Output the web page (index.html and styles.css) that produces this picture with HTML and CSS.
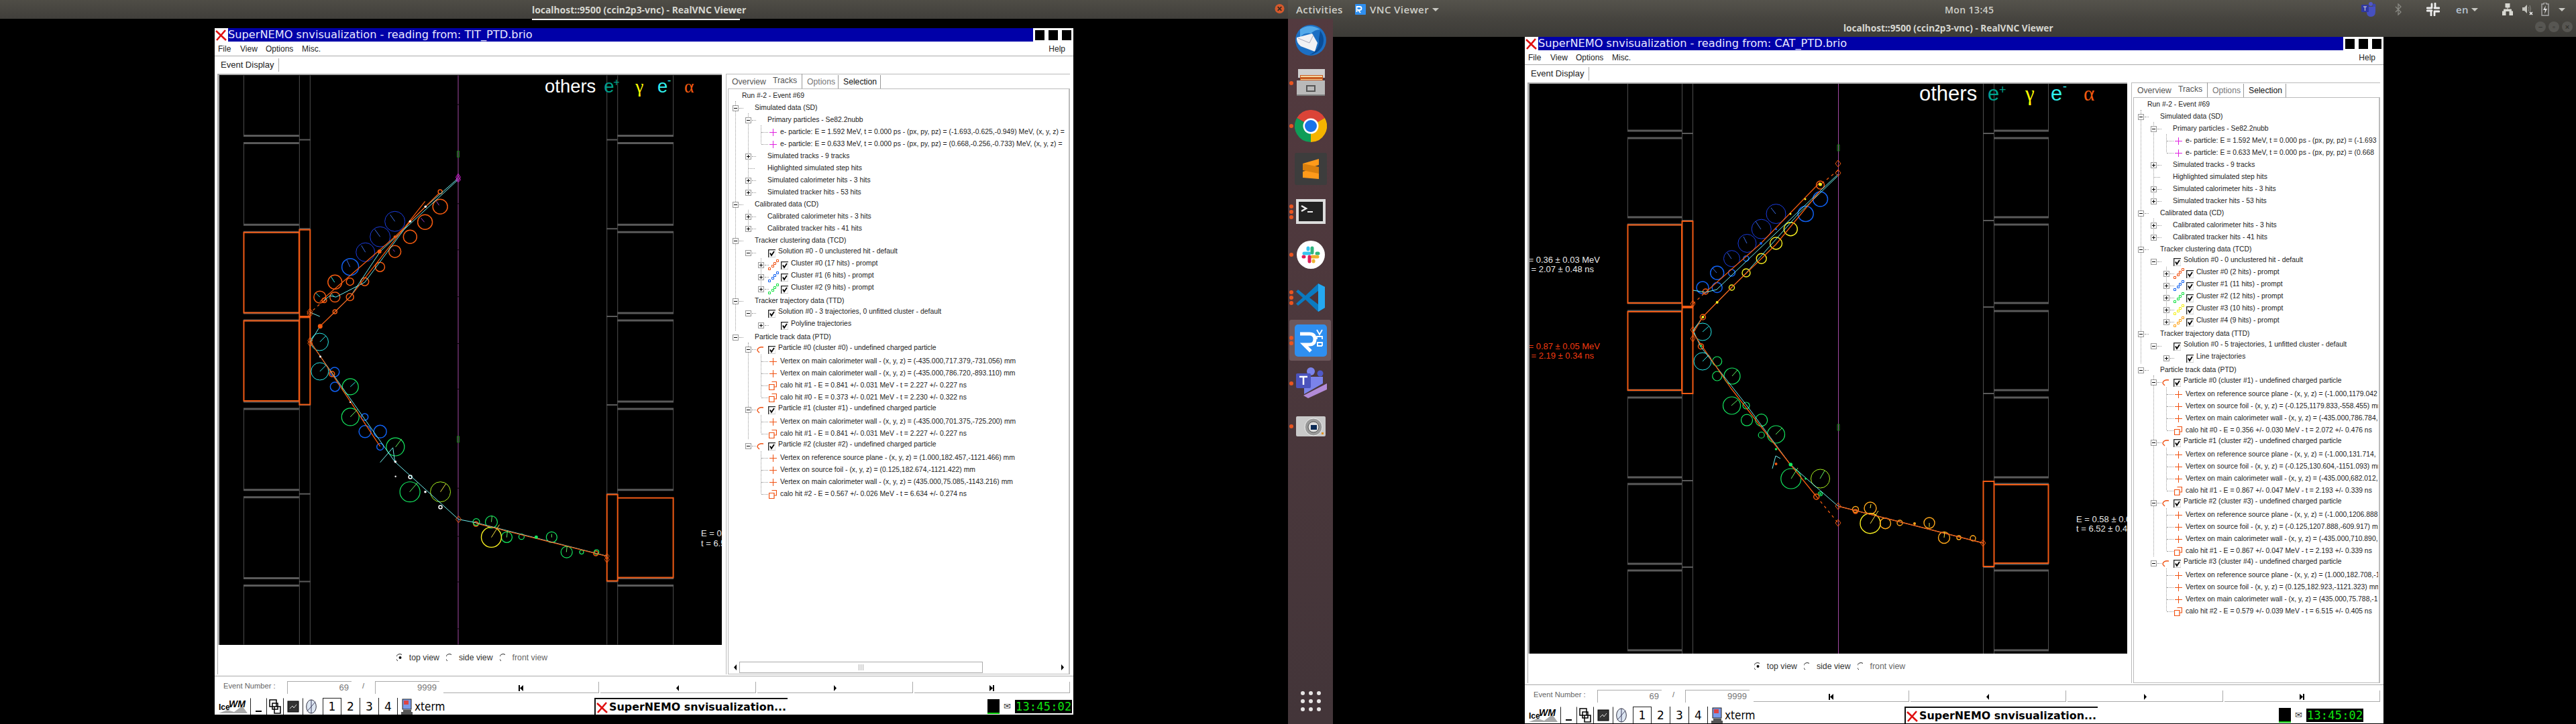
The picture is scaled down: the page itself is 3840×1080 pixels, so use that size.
FILE: index.html
```html
<!DOCTYPE html>
<html lang="en"><head><meta charset="utf-8"><title>SuperNEMO VNC</title><link rel="stylesheet" href="styles.css"></head>
<body>
<svg class="defs" width="0" height="0">
<symbol id="cross" viewBox="0 0 11 11"><path d="M5.5 0V11M0 5.5H11" fill="none" stroke="currentColor"/></symbol>
<symbol id="calo" viewBox="0 0 12 13"><path d="M4.5 .5H11.5V8H8M.5 4.5H8V12.5H.5Z" fill="none" stroke="#f05010" stroke-width="1.2"/></symbol>
<symbol id="arc" viewBox="0 0 11 11"><path d="M1 7C1 3 5 1 10 2M1 7 4 10" fill="none" stroke="#f05010" stroke-width="1.3"/></symbol>
<symbol id="chk" viewBox="0 0 11 12"><path d="M.7 12V.7H11" fill="none" stroke="#222" stroke-width="1.3"/><path d="M11 1.5V11.5H1.5" fill="none" stroke="#ccc"/><path d="M3 5.5 5 9 9 3" fill="none" stroke="#000" stroke-width="1.8"/></symbol>
<symbol id="stairs" viewBox="0 0 16 16"><path d="M.5 12.5H3.5V15.5H.5ZM5.5 8.500H8.500V11.500H5.5ZM8.500 4.500H11.500V7.500H8.500ZM12.500 .5H15.500V3.500H12.500Z" fill="none" stroke="currentColor"/></symbol>
<symbol id="radio" viewBox="0 0 10 12"><path d="M8 1.500A4.500 4.500 0 0 0 2 11" fill="none" stroke="#222"/></symbol>
<symbol id="radioOn" viewBox="0 0 10 12"><path d="M8 1.500A4.500 4.500 0 0 0 2 11" fill="none" stroke="#222"/><circle cx="5.500" cy="6" r="2" fill="#111"/></symbol>
<symbol id="xlogo" viewBox="0 0 20 20"><path d="M2 4 17 18M16 3 3 18" fill="none" stroke="#e01010" stroke-width="2.600"/></symbol>
<symbol id="first" viewBox="0 0 7 9"><path d="M0 0H2V9H0ZM7 0V9L2 4.500Z"/></symbol>
<symbol id="prev" viewBox="0 0 7 9"><path d="M5 0V9L1 4.500Z"/></symbol>
<symbol id="next" viewBox="0 0 7 9"><path d="M2 0V9L6 4.500Z"/></symbol>
<symbol id="last" viewBox="0 0 7 9"><path d="M0 0V9L5 4.500ZM5 0H7V9H5Z"/></symbol>
<symbol id="ice" viewBox="0 0 45 24"><path d="M1 22 14 17 24 20 36 11 44 22H1Z" fill="#aaa"/><text x="1" y="17" font-size="12" font-weight="700" font-family="Liberation Sans">Ice</text><text x="16" y="13" font-size="14" font-weight="700" font-style="italic" font-family="Liberation Sans">WM</text></symbol>
<symbol id="wins" viewBox="0 0 18 22"><path d="M1 1H11V11H1ZM5 6H13V15H5ZM8 11H17V21H8Z" fill="#fff" stroke="#000" stroke-width="1.500"/></symbol>
<symbol id="mon" viewBox="0 0 18 20"><rect x="1" y="2" width="16" height="16" fill="#333" stroke="#000"/><path d="M4 13 8 9 10 12 14 7" stroke="#ddd" fill="none"/></symbol>
<symbol id="glob" viewBox="0 0 18 24"><ellipse cx="9" cy="12" rx="8" ry="11" fill="#dde6f2" stroke="#223"/><path d="M9 1V23M9 12 2 20M9 12 16 4" stroke="#335" fill="none"/></symbol>
<symbol id="xt" viewBox="0 0 18 24"><rect x="3" y="1" width="13" height="15" fill="#7a9ae8" stroke="#222"/><path d="M4 17H16V20H4ZM1 20H18V24H1Z" fill="#555"/><path d="M5 3H12V9H5Z" fill="#d44"/></symbol>
</svg>

<div class="desktop">
  <section class="screen-a">
    <div class="shade-a"><span class="vnc-title">localhost::9500 (ccin2p3-vnc) - RealVNC Viewer</span><span class="strip"></span>
      <svg class="close-a" viewBox="0 0 16 16"><circle cx="8" cy="8" r="7.500" fill="#d5592c"/><path d="M5 5 11 11M11 5 5 11" stroke="#3a2a20" stroke-width="2"/></svg></div>
  </section>

  <section class="screen-b">
    <header class="topbar">
      <span class="activities">Activities</span>
      <svg class="appicon" viewBox="0 0 16 16"><rect width="16" height="16" rx="1" fill="#2f8ff0"/><path d="M2.500 12V4H7Q9.500 4 9.500 6.500T7 9H4.500L8 13" fill="none" stroke="#fff" stroke-width="1.800"/></svg>
      <span class="appname">VNC Viewer</span><i class="caret"></i>
      <span class="dateclock">Mon 13:45</span>
      <div class="tray">
        <svg class="tr-teams" viewBox="0 0 22 24"><circle cx="14" cy="4" r="3" fill="#5058c8"/><circle cx="19" cy="6" r="2.500" fill="#3c46b0"/><path d="M8 8H21V15Q21 23 14 23 8 23 8 16Z" fill="#4650c0"/><rect y="5" width="11" height="11" rx="1" fill="#3038a0"/><path d="M3 8H8M5.500 8V14" stroke="#ddd"/></svg>
        <svg class="tr-bt" viewBox="0 0 10 18"><path d="M1 5 9 13 5 17V1L9 5 1 13" fill="none" stroke="#8a8a84" stroke-width="1.300"/></svg>
        <svg class="tr-slack" viewBox="0 0 20 20"><path d="M8 2V8M13 1V8M1 8H8M1 12H8M12 13H19M12 8H19M7 13V19M12 13V19" stroke="#eee" stroke-width="2.800" stroke-linecap="round"/></svg>
        <span class="tr-en">en</span><i class="caret small-gap"></i>
        <svg class="tr-net" viewBox="0 0 16 18"><path d="M5 0H11V6H5ZM0 12H5V18H0ZM11 12H16V18H11ZM8 6V9M2.500 12V9H13.500V12" fill="#d8d8d2" stroke="#d8d8d2"/></svg>
        <svg class="tr-spk" viewBox="0 0 16 18"><path d="M0 6H3L7 2V15L3 11H0Z" fill="#c4c4be"/><path d="M9 5Q11 8 9 12M11 3Q14 8 11 14" stroke="#8a8a84" fill="none"/><path d="M11 13 15 17M15 13 11 17" stroke="#eee" stroke-width="1.600"/></svg>
        <svg class="tr-bat" viewBox="0 0 12 20"><path d="M4 0H8V2H11V19H1V2H4Z" fill="none" stroke="#aaa" stroke-width="1.400"/><path d="M7 4 3 11H6L5 17 9 9H6Z" fill="#ddd"/></svg>
        <i class="caret"></i>
      </div>
    </header>
    <div class="under">
      <nav class="dock">
        <a class="dk"><svg class="ico" viewBox="0 0 48 48"><circle cx="24" cy="24" r="23" fill="#1c6fc4"/><path d="M8 8Q22-2 38 8 30 8 24 14 14 12 8 20Z" fill="#53a9ea"/><path d="M3 20 26 14 34 28 30 41 9 33Q2 27 3 20Z" fill="#f1f1f4"/><path d="M5 21 22 28 28 16" fill="none" stroke="#aab"/><path d="M38 10Q47 22 40 35 34 44 22 46 38 38 36 22Z" fill="#0a4c96"/></svg></a>
        <a class="dk run1"><svg class="ico" viewBox="0 0 48 48"><path d="M5 3H45V16H5Z" fill="#cfcfcf"/><path d="M8 12H42V22H8Z" fill="#c8591f"/><path d="M9 13H41V15H9ZM9 18H41V19H9Z" fill="#f3d7a0"/><path d="M3 20H45V43H3Z" fill="#b9b9b9"/><path d="M3 41H45V43H3Z" fill="#7a7a7a"/><rect x="18" y="28" width="12" height="8" fill="none" stroke="#555" stroke-width="2"/></svg></a>
        <a class="dk run1"><svg class="ico" viewBox="0 0 48 48"><path d="M24 24 3.200 12A24 24 0 0 1 44.800 12Z" fill="#db4437"/><path d="M24 24 44.800 12A24 24 0 0 1 24 48Z" fill="#f4b400"/><path d="M24 24 24 48A24 24 0 0 1 3.200 12Z" fill="#0f9d58"/><circle cx="24" cy="24" r="11.500" fill="#fff"/><circle cx="24" cy="24" r="9" fill="#1a73e8"/></svg></a>
        <a class="dk"><svg class="ico" viewBox="0 0 48 48"><rect width="48" height="48" rx="3" fill="#3d3d3d"/><path d="M12 16 36 9V18L12 26ZM36 39 12 37V28L36 21Z" fill="#ff9a1a"/><path d="M12 26 36 31V21L12 16Z" fill="#d97f0e"/></svg></a>
        <a class="dk run3"><svg class="ico" viewBox="0 0 48 48"><rect x="2" y="5" width="44" height="37" fill="#dcdcdc"/><rect x="6" y="9" width="36" height="29" fill="#222"/><path d="M10 15 17 19 10 23" fill="none" stroke="#eee" stroke-width="2.500"/><path d="M19 24H27" stroke="#eee" stroke-width="2"/></svg></a>
        <a class="dk run1"><svg class="ico" viewBox="0 0 48 48"><circle cx="24" cy="24" r="21" fill="#fff"/><path d="M14 22H22M20 14V16" stroke="#36c5f0" stroke-width="5" stroke-linecap="round"/><path d="M26 14V21M33 22H35" stroke="#2eb67d" stroke-width="5" stroke-linecap="round"/><path d="M26 27H34M28 34V33" stroke="#ecb22e" stroke-width="5" stroke-linecap="round"/><path d="M22 27V34M14 27H13" stroke="#e01e5a" stroke-width="5" stroke-linecap="round"/></svg></a>
        <a class="dk run3"><svg class="ico" viewBox="0 0 48 48"><path d="M35 3 45 8V39L35 45 16 27 5 36 2 33 12 24 2 15 5 12 16 21Z" fill="#0a7ac0"/><path d="M35 3 45 8V39L35 45Z" fill="#25a8f0"/><path d="M35 14V34L22 24Z" fill="#4c3236"/></svg></a>
        <a class="dk run2 active"><svg class="ico" viewBox="0 0 48 48"><rect width="48" height="48" rx="5" fill="#2f8ff0"/><path d="M8 14H22Q30 14 30 22T22 30H14L24 40" fill="none" stroke="#fff" stroke-width="5"/><path d="M33 8 37 15 41 8M33 22V18H41V22M41 32H34V27H41V32" fill="none" stroke="#fff" stroke-width="1.800"/></svg></a>
        <a class="dk run1"><svg class="ico" viewBox="0 0 48 48"><circle cx="24" cy="6" r="6" fill="#7b83eb"/><circle cx="38" cy="9" r="4.500" fill="#5059c9"/><path d="M14 14H42V24L14 40Z" fill="#7b83eb"/><rect x="2" y="9" width="22" height="22" rx="2" fill="#4b53bc"/><path d="M7 14H19M13 14V26" stroke="#fff" stroke-width="2.500"/><path d="M13 42 48 24V33L20 46Z" fill="#b38bd8"/></svg></a>
        <a class="dk run1"><svg class="ico cam" viewBox="0 0 48 34"><rect x="2" y="2" width="44" height="30" rx="2" fill="#c9c9c9"/><circle cx="28" cy="18" r="13" fill="#999" stroke="#eee"/><circle cx="28" cy="18" r="8" fill="#ddd" stroke="#555"/><rect x="24" y="15" width="9" height="7" fill="#0a2a55"/><rect x="40" y="26" width="3" height="3" fill="#e09020"/></svg></a>
        <div class="apps"><i></i><i></i><i></i><i></i><i></i><i></i><i></i><i></i><i></i></div>
      </nav>
      <div class="shade-b"><span class="vnc-title2">localhost::9500 (ccin2p3-vnc) - RealVNC Viewer</span>
        <div class="winctl"><i>–</i><i>▫</i><i>×</i></div></div>
    </div>
  </section>

  <!-- left VNC session -->
  <article class="win win-a">
    <div class="tbar"><svg class="xl"><use href="#xlogo"/></svg><div class="tbar-blue">SuperNEMO snvisualization - reading from: TIT_PTD.brio</div><div class="tbtns"><i></i><i></i><i></i></div></div>
    <div class="menu"><span>File</span><span>View</span><span>Options</span><span>Misc.</span><span class="help">Help</span></div>
    <div class="maintab"><span>Event Display</span></div>
    <div class="work">
      <div class="viewer">
        <svg class="canvas canvas-a" viewBox="326 112 750 850">
          <path class="thin" d="M362.500 112V202M362.500 213V334M362.500 345V466M362.500 477V598M362.500 609V731M362.500 742V863M362.500 873V962M1003.500 112V202M1003.500 213V334M1003.500 345V466M1003.500 477V598M1003.500 609V731M1003.500 742V863M1003.500 873V962M445.500 112V962M461.500 112V962M904.500 112V962M920.500 112V962"/>
          <path class="thick" d="M362 202H445M362 213H445M362 335H445M362 346H445M362 467H445M362 478H445M362 599H445M362 610H445M362 731H445M362 742H445M362 863H445M362 874H445M920 202H1004M920 213H1004M920 335H1004M920 346H1004M920 467H1004M920 478H1004M920 599H1004M920 610H1004M920 731H1004M920 863H1004M920 874H1004"/>
          <path class="sep" d="M445 208H462M445 341H462M445 472H462M445 604H462M445 737H462M445 868H462M904 208H920M904 341H920M904 472H920M904 604H920M904 737H920M904 868H920"/>
          <path class="hit" d="M362.500 346.500H445V466.500H362.500ZM445.500 342.500H461.500V472H445.500ZM362.500 478.500H445V598H362.500ZM445.500 473.500H461.500V603.500H445.500ZM920.500 743H1003.500V862H920.500ZM904.500 738H920.500V867H904.500Z"/>
          <path class="mid" d="M682.500 112V155M682.500 156V303M682.500 304V372M682.500 373V442M682.500 443V512M682.500 513V580M682.500 581V728M682.500 729V800M682.500 801V868M682.500 869V938M682.500 939V962"/>
          <path class="g-tick" d="M681 225H684V234H681ZM681 651H684V660H681Z"/>
          <g class="c-blue2"><circle cx="588" cy="330" r="15"/><circle cx="566" cy="353" r="15"/><circle cx="544" cy="376" r="14"/></g>
          <g class="c-blue"><circle cx="521.400" cy="398" r="12.500"/><circle cx="498" cy="555" r="7"/><circle cx="498.600" cy="577" r="7"/><circle cx="543" cy="622" r="5"/><circle cx="543.400" cy="644" r="9"/><circle cx="566" cy="644" r="9.500"/><circle cx="566" cy="666.700" r="5"/></g>
          <g class="c-or"><circle cx="655.600" cy="308" r="11"/><circle cx="633" cy="331" r="11"/><circle cx="610.700" cy="353" r="10"/><circle cx="588" cy="375" r="9"/><circle cx="565.800" cy="398" r="7"/><circle cx="543" cy="420" r="6"/><circle cx="521" cy="420" r="5.500"/><circle cx="521" cy="443" r="5.500"/><circle cx="498.500" cy="420.700" r="10.500"/><circle cx="498.500" cy="443" r="7.500"/><circle cx="476" cy="443" r="9"/><circle cx="482.600" cy="448" r="3.500"/><circle cx="498.500" cy="465" r="3"/><circle cx="655.600" cy="285.700" r="3"/><circle cx="494" cy="558" r="4"/><circle cx="709" cy="782" r="3.500"/><circle cx="888" cy="826" r="3.500"/></g>
          <g class="c-cy"><circle cx="475.700" cy="510" r="13"/><circle cx="476" cy="554" r="13"/></g>
          <g class="c-gr"><circle cx="521.500" cy="577" r="12"/><circle cx="521.500" cy="622" r="13"/><circle cx="588.700" cy="666.700" r="13.500"/><circle cx="610.500" cy="734" r="15"/><circle cx="709.500" cy="779" r="5"/><circle cx="732" cy="779" r="9"/><circle cx="755" cy="801.700" r="8"/><circle cx="777" cy="801" r="4"/><circle cx="822" cy="801.700" r="8"/><circle cx="844.400" cy="824" r="8.500"/><circle cx="866.700" cy="824" r="3"/><circle cx="889" cy="824" r="3.500"/></g>
          <circle class="c-yg" cx="656" cy="734" r="15"/><circle class="c-ye" cx="732" cy="801.700" r="15"/>
          <g class="c-wh"><circle cx="611" cy="711.700" r="2.500"/><circle cx="656" cy="756.700" r="2.500"/></g>
          <path class="ln-cy" d="M682 266 634 308 610 331 543 421 500 443 491 441 482 448M682 268 566 375 521 443 476 487 462 510M462 510 477 532 588 689 683 775 709 780 905 830M566 690 585 668 588 689M462 466 476 472"/>
          <path class="ln-or" d="M654 288 588 353 476 450M633 300 521 443 476 487M462 510 477 532 566 666M709 781 904 830"/>
          <path class="ln-ordash" d="M482 448 461 467"/>
          <g class="f-or"><circle cx="588" cy="353" r="2"/><circle cx="565" cy="375" r="3"/><circle cx="476.500" cy="486.700" r="3.500"/></g>
          <g class="f-wh"><circle cx="633.700" cy="308" r="1.800"/><circle cx="610.700" cy="330" r="1.800"/><circle cx="476.700" cy="532" r="1.500"/><circle cx="588.700" cy="689" r="1.800"/><circle cx="633.400" cy="734" r="1.800"/><circle cx="521.500" cy="600" r="1.200"/><circle cx="589" cy="711" r="1.200"/></g>
          <circle class="f-gr" cx="799" cy="801.700" r="2.500"/>
          <g class="vx-m"><path d="M682.500 259 686 264 682.500 269 679 264ZM682.500 262 686 268 682.500 271 679 268Z"/></g>
          <g class="vx-o"><path d="M461 460 465 465 461 470 457 465ZM461 463 465 468 461 473 457 468ZM461.500 503 465 508 461.500 513 458 508ZM461.500 507 465 512 461.500 517 458 512ZM904.500 826 908 830 904.500 835 901 830ZM904.500 831 908 835 904.500 840 901 835ZM683 770 687 775 683 780 679 775Z"/></g>
          <g class="tick-o"><path d="M654 306 650 300M632 331 627 325M588 375 585 372"/></g>
          <path class="tick-c" d="M476 510 485 501M476 554 485 545M521.500 577 529 570M498 443 493 438M476 443 470 437M498 421 493 413"/>
          <path class="tick-b" d="M588 330 581 320M566 353 558 342M544 376 538 366M521 398 516 387"/>
          <path class="tick-g" d="M521.500 622 532 611M589 667 598 655M610 734 622 720M732 779 733 770M755 802 756 792M822 802 822 797M844 824 845 815"/>
          <path class="tick-y" d="M732 802 744 783M656 734 664 722"/>
          <text class="lg lg-w" x="811.700" y="137">others</text><text class="lg lg-t" x="900" y="137">e</text><text class="sup sup-t" x="914" y="127">+</text>
          <text class="lg lg-y greek" x="947" y="137">γ</text><text class="lg lg-c" x="980" y="137">e</text><text class="sup sup-c" x="995" y="124">-</text><text class="lg lg-o greek" x="1020" y="137">α</text>
          <text class="info iw" x="1045" y="800">E = 0.58 ± 0.03 MeV</text><text class="info iw" x="1045" y="815">t  = 6.52 ± 0.43 ns</text>
        </svg>
        <div class="views"><svg class="rd"><use href="#radioOn"/></svg><span>top view</span><svg class="rd"><use href="#radio"/></svg><span>side view</span><svg class="rd"><use href="#radio"/></svg><span class="dim">front view</span></div>
      </div>
      <aside class="panel panel-a">
        <div class="tabs"><span class="t-ov">Overview</span><span class="t-tr">Tracks</span><span class="t-op">Options</span><span class="t-se">Selection</span></div>
        <div class="content">
          <div class="tree">
            <div class="row root"><span class="txt">Run #-2 - Event #69</span></div>
            <div class="g0">
              <div class="row r0"><i class="exp"></i><span class="txt">Simulated data (SD)</span></div>
              <div class="g1">
                <div class="row r1"><i class="exp"></i><span class="txt">Primary particles - Se82.2nubb</span></div>
                <div class="g2">
                  <div class="row rleaf magenta"><svg class="cr"><use href="#cross"/></svg><span class="txt">e- particle: E = 1.592 MeV, t = 0.000 ps - (px, py, pz) = (-1.693,-0.625,-0.949) MeV, (x, y, z) =</span></div>
                  <div class="row rleaf magenta"><svg class="cr"><use href="#cross"/></svg><span class="txt">e- particle: E = 0.633 MeV, t = 0.000 ps - (px, py, pz) = (0.668,-0.256,-0.733) MeV, (x, y, z) =</span></div>
                </div>
                <div class="row r1"><i class="exp pl"></i><span class="txt">Simulated tracks - 9 tracks</span></div>
                <div class="row rplain"><span class="txt">Highlighted simulated step hits</span></div>
                <div class="row r1"><i class="exp pl"></i><span class="txt">Simulated calorimeter hits - 3 hits</span></div>
                <div class="row r1"><i class="exp pl"></i><span class="txt">Simulated tracker hits - 53 hits</span></div>
              </div>
              <div class="row r0"><i class="exp"></i><span class="txt">Calibrated data (CD)</span></div>
              <div class="g1">
                <div class="row r1"><i class="exp pl"></i><span class="txt">Calibrated calorimeter hits - 3 hits</span></div>
                <div class="row r1"><i class="exp pl"></i><span class="txt">Calibrated tracker hits - 41 hits</span></div>
              </div>
              <div class="row r0"><i class="exp"></i><span class="txt">Tracker clustering data (TCD)</span></div>
              <div class="row rsol ck"><i class="exp"></i><svg class="cb"><use href="#chk"/></svg><span class="txt">Solution #0 - 0 unclustered hit - default</span></div>
              <div class="g2">
                <div class="row rclus ck c-orange"><i class="exp pl"></i><svg class="st"><use href="#stairs"/></svg><svg class="cb"><use href="#chk"/></svg><span class="txt">Cluster #0 (17 hits) - prompt</span></div>
                <div class="row rclus ck c-blueish"><i class="exp pl"></i><svg class="st"><use href="#stairs"/></svg><svg class="cb"><use href="#chk"/></svg><span class="txt">Cluster #1 (6 hits) - prompt</span></div>
                <div class="row rclus ck c-green"><i class="exp pl"></i><svg class="st"><use href="#stairs"/></svg><svg class="cb"><use href="#chk"/></svg><span class="txt">Cluster #2 (9 hits) - prompt</span></div>
              </div>
              <div class="row r0"><i class="exp"></i><span class="txt">Tracker trajectory data (TTD)</span></div>
              <div class="row rsol ck"><i class="exp"></i><svg class="cb"><use href="#chk"/></svg><span class="txt">Solution #0 - 3 trajectories, 0 unfitted cluster - default</span></div>
              <div class="row rpoly ck"><i class="exp pl"></i><svg class="cb"><use href="#chk"/></svg><span class="txt">Polyline trajectories</span></div>
            </div>
            <div class="row r0"><i class="exp"></i><span class="txt">Particle track data (PTD)</span></div>
            <div class="g1 open">
              <div class="row rpart ck"><i class="exp"></i><svg class="ar"><use href="#arc"/></svg><svg class="cb"><use href="#chk"/></svg><span class="txt">Particle #0 (cluster #0) - undefined charged particle</span></div>
              <div class="g2">
                <div class="row rleaf orange"><svg class="cr"><use href="#cross"/></svg><span class="txt">Vertex on main calorimeter wall - (x, y, z) = (-435.000,717.379,-731.056) mm</span></div>
                <div class="row rleaf orange"><svg class="cr"><use href="#cross"/></svg><span class="txt">Vertex on main calorimeter wall - (x, y, z) = (-435.000,786.720,-893.110) mm</span></div>
                <div class="row rleaf"><svg class="cl"><use href="#calo"/></svg><span class="txt">calo hit #1 - E = 0.841 +/- 0.031 MeV - t = 2.227 +/- 0.227 ns</span></div>
                <div class="row rleaf"><svg class="cl"><use href="#calo"/></svg><span class="txt">calo hit #0 - E = 0.373 +/- 0.021 MeV - t = 2.230 +/- 0.322 ns</span></div>
              </div>
              <div class="row rpart ck"><i class="exp"></i><svg class="ar"><use href="#arc"/></svg><svg class="cb"><use href="#chk"/></svg><span class="txt">Particle #1 (cluster #1) - undefined charged particle</span></div>
              <div class="g2">
                <div class="row rleaf orange"><svg class="cr"><use href="#cross"/></svg><span class="txt">Vertex on main calorimeter wall - (x, y, z) = (-435.000,701.375,-725.200) mm</span></div>
                <div class="row rleaf"><svg class="cl"><use href="#calo"/></svg><span class="txt">calo hit #1 - E = 0.841 +/- 0.031 MeV - t = 2.227 +/- 0.227 ns</span></div>
              </div>
            </div>
            <div class="row rpart ck"><i class="exp"></i><svg class="ar"><use href="#arc"/></svg><svg class="cb"><use href="#chk"/></svg><span class="txt">Particle #2 (cluster #2) - undefined charged particle</span></div>
            <div class="g2">
              <div class="row rleaf orange"><svg class="cr"><use href="#cross"/></svg><span class="txt">Vertex on reference source plane - (x, y, z) = (1.000,182.457,-1121.466) mm</span></div>
              <div class="row rleaf orange"><svg class="cr"><use href="#cross"/></svg><span class="txt">Vertex on source foil - (x, y, z) = (0.125,182.674,-1121.422) mm</span></div>
              <div class="row rleaf orange"><svg class="cr"><use href="#cross"/></svg><span class="txt">Vertex on main calorimeter wall - (x, y, z) = (435.000,75.085,-1143.216) mm</span></div>
              <div class="row rleaf"><svg class="cl"><use href="#calo"/></svg><span class="txt">calo hit #2 - E = 0.567 +/- 0.026 MeV - t = 6.634 +/- 0.274 ns</span></div>
            </div>
          </div>
          <div class="hscroll"><svg class="sa"><use href="#prev"/></svg><div class="thumb"></div><svg class="sa sa-end"><use href="#next"/></svg></div>
        </div>
      </aside>
    </div>
    <div class="eventbar">
      <span class="ev-lab">Event Number :</span><span class="ev-in">69</span><span class="ev-sl">/</span><span class="ev-in">9999</span>
      <div class="nav"><button><svg><use href="#first"/></svg></button><button><svg><use href="#prev"/></svg></button><button><svg><use href="#next"/></svg></button><button><svg><use href="#last"/></svg></button></div>
    </div>
    <div class="taskbar">
      <svg class="t-logo"><use href="#ice"/></svg>
      <span class="t-btn"><i class="minbar"></i></span><span class="t-btn t-w"><svg class="t-ic"><use href="#wins"/></svg></span><span class="t-btn t-m"><svg class="t-ic"><use href="#mon"/></svg></span><span class="t-btn t-g"><svg class="t-ic"><use href="#glob"/></svg></span>
      <div class="wss"><span class="on">1</span><span>2</span><span>3</span><span>4</span></div>
      <svg class="t-xt"><use href="#xt"/></svg><span class="t-term">xterm</span>
      <div class="task"><svg class="task-x"><use href="#xlogo"/></svg><span>SuperNEMO snvisualization...</span></div>
      <div class="sysclock"><i class="cpu"></i><span class="mail">✉</span><span class="lcd">13:45:02</span></div>
    </div>
  </article>

  <!-- right VNC session -->
  <article class="win win-b">
    <div class="tbar"><svg class="xl"><use href="#xlogo"/></svg><div class="tbar-blue">SuperNEMO snvisualization - reading from: CAT_PTD.brio</div><div class="tbtns"><i></i><i></i><i></i></div></div>
    <div class="menu"><span>File</span><span>View</span><span>Options</span><span>Misc.</span><span class="help">Help</span></div>
    <div class="maintab"><span>Event Display</span></div>
    <div class="work">
      <div class="viewer wide">
        <svg class="canvas canvas-b" viewBox="2280 125 891 850">
          <path class="thin" d="M2426.500 125V195M2426.500 206V324M2426.500 335V452M2426.500 464V582M2426.500 593V712M2426.500 722V841M2426.500 851V970M3053.500 125V195M3053.500 206V324M3053.500 335V452M3053.500 464V582M3053.500 593V712M3053.500 722V841M3053.500 851V970M2507.500 125V975M2523.500 125V975M2956.500 125V975M2972.500 125V975"/>
          <path class="thick" d="M2426 195H2507M2426 206H2507M2426 324H2507M2426 335H2507M2426 452H2507M2426 464H2507M2426 582H2507M2426 593H2507M2426 712H2507M2426 722H2507M2426 841H2507M2426 851H2507M2426 970H2507M2972 195H3054M2972 206H3054M2972 324H3054M2972 335H3054M2972 452H3054M2972 464H3054M2972 582H3054M2972 593H3054M2972 712H3054M2972 722H3054M2972 841H3054M2972 851H3054M2972 970H3054"/>
          <path class="sep" d="M2507 199H2524M2507 329H2524M2507 458H2524M2507 587H2524M2507 717H2524M2507 846H2524M2956 199H2972M2956 329H2972M2956 458H2972M2956 587H2972M2956 846H2972"/>
          <path class="hit" d="M2426.500 335.500H2507V452H2426.500ZM2507.500 330H2523.500V457H2507.500ZM2426.500 465H2507V582H2426.500ZM2507.500 459H2523.500V587H2507.500ZM2972.500 723H3053.500V840H2972.500ZM2956.500 718H2972.500V845H2956.500Z"/>
          <path class="mid" d="M2740.500 125V975"/>
          <path class="g-tick" d="M2739 216H2742V225H2739ZM2739 633H2742V642H2739Z"/>
          <g class="c-blue2"><circle cx="2647.500" cy="319" r="14.500"/><circle cx="2625.700" cy="341.700" r="14.500"/><circle cx="2604.400" cy="363" r="13.500"/><circle cx="2581.500" cy="385.700" r="12"/></g>
          <g class="c-blue"><circle cx="2713.500" cy="297" r="11"/><circle cx="2691.700" cy="319" r="11.500"/><circle cx="2559.700" cy="407" r="10"/><circle cx="2538" cy="429" r="9"/><circle cx="2559.700" cy="429" r="7.500"/><circle cx="2581.500" cy="407" r="5"/><circle cx="2603" cy="385.700" r="4"/></g>
          <g class="c-ye"><circle cx="2669.300" cy="341.700" r="10"/><circle cx="2647.500" cy="363" r="9"/><circle cx="2625.700" cy="385.700" r="7.500"/><circle cx="2603" cy="407" r="6"/><circle cx="2581.500" cy="429" r="4"/><circle cx="2788" cy="780.700" r="15"/></g>
          <g class="c-cy"><circle cx="2538" cy="495" r="13"/><circle cx="2538" cy="539" r="13"/></g>
          <g class="c-gr"><circle cx="2559.700" cy="539" r="7"/><circle cx="2559.700" cy="561" r="7"/><circle cx="2582" cy="561" r="12"/><circle cx="2581.500" cy="605" r="13"/><circle cx="2603" cy="605" r="5"/><circle cx="2604" cy="626.700" r="8.500"/><circle cx="2625.700" cy="626.700" r="9"/><circle cx="2625.700" cy="649" r="4.500"/><circle cx="2647.500" cy="648" r="13"/><circle cx="2669.800" cy="714" r="15"/><circle cx="2713.500" cy="736.700" r="3"/></g>
          <circle class="c-yg" cx="2713.500" cy="714" r="14"/>
          <g class="c-am"><circle cx="2766" cy="760" r="4.500"/><circle cx="2788" cy="758" r="9"/><circle cx="2810.500" cy="780.700" r="8"/><circle cx="2832" cy="780" r="4"/><circle cx="2876" cy="780" r="8"/><circle cx="2898" cy="802" r="8.500"/><circle cx="2920" cy="802" r="3"/><circle cx="2941" cy="803" r="4"/></g>
          <g class="c-or"><circle cx="2713.500" cy="276" r="6"/><circle cx="2542.400" cy="435" r="4"/><circle cx="2538.400" cy="473" r="4"/><circle cx="2535.500" cy="516.700" r="4"/><circle cx="2707.700" cy="741" r="4"/><circle cx="2766" cy="763" r="3"/></g>
          <path class="ln-cy" d="M2740 260 2713 285 2559 432 2542 436 2524 433M2740 262 2680 320 2603 407 2538 473 2524 493 2535 517 2604 605 2669 693 2740 755 2956 810M2642 699 2647 680 2654 684"/>
          <path class="ln-or" d="M2713 272 2625 363 2540 438M2713 285 2647 365 2581 429 2538 473 2524 497M2524 497 2581 580 2669 693 2708 741M2740 755 2956 810"/>
          <path class="ln-ordash" d="M2740 254 2713 276M2540 438 2524 453M2708 741 2740 780"/>
          <g class="f-ye"><circle cx="2713.500" cy="275" r="2.500"/><circle cx="2691" cy="297" r="1.500"/><circle cx="2669" cy="319" r="1.500"/><circle cx="2559.700" cy="451" r="2"/><circle cx="2538.400" cy="473" r="2"/></g>
          <g class="f-bl"><circle cx="2625" cy="363" r="2"/><circle cx="2647.500" cy="341.700" r="1.500"/></g>
          <g class="f-gr"><circle cx="2647.500" cy="670" r="1.800"/><circle cx="2669.300" cy="693" r="2.800"/><circle cx="2691.700" cy="714" r="1.500"/><circle cx="2713.500" cy="736.700" r="1.500"/><circle cx="2535.500" cy="516" r="1.500"/></g>
          <circle class="f-or" cx="2647.500" cy="692" r="2"/><circle class="f-am" cx="2854" cy="781" r="2"/>
          <g class="vx-o"><path d="M2740 239 2744 244 2740 249 2736 244ZM2740 253 2744 258 2740 263 2736 258ZM2523.500 448 2527 453 2523.500 458 2520 453ZM2523.500 487 2527 492 2523.500 497 2520 492ZM2523.500 500 2527 505 2523.500 510 2520 505ZM2740 750 2744 755 2740 760 2736 755ZM2740 775 2744 780 2740 785 2736 780ZM2956 805 2960 810 2956 815 2952 810Z"/></g>
          <path class="tick-b" d="M2647 319 2640 310M2625 342 2617 330M2604 363 2599 353M2581 386 2575 377M2559 407 2553 400"/>
          <path class="tick-c" d="M2538 495 2547 487M2538 539 2547 530"/>
          <path class="tick-g" d="M2582 561 2590 552M2581 605 2590 597M2647 648 2657 638M2670 714 2680 698M2713 714 2720 702"/>
          <path class="tick-y" d="M2788 781 2800 762M2788 758 2789 752M2876 780 2876 786M2898 802 2899 793"/>
          <text class="lg2 lg-w" x="2861" y="150">others</text><text class="lg2 lg-t" x="2963" y="150">e</text><text class="sup2 sup-t" x="2980" y="140">+</text>
          <text class="lg2 lg-y greek" x="3019" y="150">γ</text><text class="lg2 lg-c" x="3057" y="150">e</text><text class="sup2 sup-c" x="3075" y="135">-</text><text class="lg2 lg-o greek" x="3106" y="150">α</text>
          <text class="info iw" x="2385" y="392" text-anchor="end">E = 0.36 ± 0.03 MeV</text><text class="info iw" x="2376" y="406" text-anchor="end">t = 2.07 ± 0.48 ns</text>
          <text class="info ir" x="2385" y="521" text-anchor="end">E = 0.87 ± 0.05 MeV</text><text class="info ir" x="2376" y="535" text-anchor="end">t = 2.19 ± 0.34 ns</text>
          <text class="info iw" x="3095" y="779">E = 0.58 ± 0.04 MeV</text><text class="info iw" x="3095" y="793">t  = 6.52 ± 0.40 ns</text>
        </svg>
        <div class="views"><svg class="rd"><use href="#radioOn"/></svg><span>top view</span><svg class="rd"><use href="#radio"/></svg><span>side view</span><svg class="rd"><use href="#radio"/></svg><span class="dim">front view</span></div>
      </div>
      <aside class="panel panel-b">
        <div class="tabs"><span class="t-ov">Overview</span><span class="t-tr">Tracks</span><span class="t-op">Options</span><span class="t-se">Selection</span></div>
        <div class="content">
          <div class="tree">
            <div class="row root"><span class="txt">Run #-2 - Event #69</span></div>
            <div class="g0">
              <div class="row r0"><i class="exp"></i><span class="txt">Simulated data (SD)</span></div>
              <div class="g1">
                <div class="row r1"><i class="exp"></i><span class="txt">Primary particles - Se82.2nubb</span></div>
                <div class="g2">
                  <div class="row rleaf magenta"><svg class="cr"><use href="#cross"/></svg><span class="txt">e- particle: E = 1.592 MeV, t = 0.000 ps - (px, py, pz) = (-1.693</span></div>
                  <div class="row rleaf magenta"><svg class="cr"><use href="#cross"/></svg><span class="txt">e- particle: E = 0.633 MeV, t = 0.000 ps - (px, py, pz) = (0.668</span></div>
                </div>
                <div class="row r1"><i class="exp pl"></i><span class="txt">Simulated tracks - 9 tracks</span></div>
                <div class="row rplain"><span class="txt">Highlighted simulated step hits</span></div>
                <div class="row r1"><i class="exp pl"></i><span class="txt">Simulated calorimeter hits - 3 hits</span></div>
                <div class="row r1"><i class="exp pl"></i><span class="txt">Simulated tracker hits - 53 hits</span></div>
              </div>
              <div class="row r0"><i class="exp"></i><span class="txt">Calibrated data (CD)</span></div>
              <div class="g1">
                <div class="row r1"><i class="exp pl"></i><span class="txt">Calibrated calorimeter hits - 3 hits</span></div>
                <div class="row r1"><i class="exp pl"></i><span class="txt">Calibrated tracker hits - 41 hits</span></div>
              </div>
              <div class="row r0"><i class="exp"></i><span class="txt">Tracker clustering data (TCD)</span></div>
              <div class="row rsol ck"><i class="exp"></i><svg class="cb"><use href="#chk"/></svg><span class="txt">Solution #0 - 0 unclustered hit - default</span></div>
              <div class="g2">
                <div class="row rclus ck c-orange"><i class="exp pl"></i><svg class="st"><use href="#stairs"/></svg><svg class="cb"><use href="#chk"/></svg><span class="txt">Cluster #0 (2 hits) - prompt</span></div>
                <div class="row rclus ck c-blueish"><i class="exp pl"></i><svg class="st"><use href="#stairs"/></svg><svg class="cb"><use href="#chk"/></svg><span class="txt">Cluster #1 (11 hits) - prompt</span></div>
                <div class="row rclus ck c-green"><i class="exp pl"></i><svg class="st"><use href="#stairs"/></svg><svg class="cb"><use href="#chk"/></svg><span class="txt">Cluster #2 (12 hits) - prompt</span></div>
                <div class="row rclus ck c-yellow"><i class="exp pl"></i><svg class="st"><use href="#stairs"/></svg><svg class="cb"><use href="#chk"/></svg><span class="txt">Cluster #3 (10 hits) - prompt</span></div>
                <div class="row rclus ck c-amber"><i class="exp pl"></i><svg class="st"><use href="#stairs"/></svg><svg class="cb"><use href="#chk"/></svg><span class="txt">Cluster #4 (9 hits) - prompt</span></div>
              </div>
              <div class="row r0"><i class="exp"></i><span class="txt">Tracker trajectory data (TTD)</span></div>
              <div class="row rsol ck"><i class="exp"></i><svg class="cb"><use href="#chk"/></svg><span class="txt">Solution #0 - 5 trajectories, 1 unfitted cluster - default</span></div>
              <div class="row rpoly ck"><i class="exp pl"></i><svg class="cb"><use href="#chk"/></svg><span class="txt">Line trajectories</span></div>
            </div>
            <div class="row r0"><i class="exp"></i><span class="txt">Particle track data (PTD)</span></div>
            <div class="g1 open">
              <div class="row rpart ck"><i class="exp"></i><svg class="ar"><use href="#arc"/></svg><svg class="cb"><use href="#chk"/></svg><span class="txt">Particle #0 (cluster #1) - undefined charged particle</span></div>
              <div class="g2">
                <div class="row rleaf orange"><svg class="cr"><use href="#cross"/></svg><span class="txt">Vertex on reference source plane - (x, y, z) = (-1.000,1179.042</span></div>
                <div class="row rleaf orange"><svg class="cr"><use href="#cross"/></svg><span class="txt">Vertex on source foil - (x, y, z) = (-0.125,1179.833,-558.455) mm</span></div>
                <div class="row rleaf orange"><svg class="cr"><use href="#cross"/></svg><span class="txt">Vertex on main calorimeter wall - (x, y, z) = (-435.000,786.784,</span></div>
                <div class="row rleaf"><svg class="cl"><use href="#calo"/></svg><span class="txt">calo hit #0 - E = 0.356 +/- 0.030 MeV - t = 2.072 +/- 0.476 ns</span></div>
              </div>
              <div class="row rpart ck"><i class="exp"></i><svg class="ar"><use href="#arc"/></svg><svg class="cb"><use href="#chk"/></svg><span class="txt">Particle #1 (cluster #2) - undefined charged particle</span></div>
              <div class="g2">
                <div class="row rleaf orange"><svg class="cr"><use href="#cross"/></svg><span class="txt">Vertex on reference source plane - (x, y, z) = (-1.000,131.714,</span></div>
                <div class="row rleaf orange"><svg class="cr"><use href="#cross"/></svg><span class="txt">Vertex on source foil - (x, y, z) = (-0.125,130.604,-1151.093) mm</span></div>
                <div class="row rleaf orange"><svg class="cr"><use href="#cross"/></svg><span class="txt">Vertex on main calorimeter wall - (x, y, z) = (-435.000,682.012,</span></div>
                <div class="row rleaf"><svg class="cl"><use href="#calo"/></svg><span class="txt">calo hit #1 - E = 0.867 +/- 0.047 MeV - t = 2.193 +/- 0.339 ns</span></div>
              </div>
              <div class="row rpart ck"><i class="exp"></i><svg class="ar"><use href="#arc"/></svg><svg class="cb"><use href="#chk"/></svg><span class="txt">Particle #2 (cluster #3) - undefined charged particle</span></div>
              <div class="g2">
                <div class="row rleaf orange"><svg class="cr"><use href="#cross"/></svg><span class="txt">Vertex on reference source plane - (x, y, z) = (-1.000,1206.888</span></div>
                <div class="row rleaf orange"><svg class="cr"><use href="#cross"/></svg><span class="txt">Vertex on source foil - (x, y, z) = (-0.125,1207.888,-609.917) mm</span></div>
                <div class="row rleaf orange"><svg class="cr"><use href="#cross"/></svg><span class="txt">Vertex on main calorimeter wall - (x, y, z) = (-435.000,710.890,</span></div>
                <div class="row rleaf"><svg class="cl"><use href="#calo"/></svg><span class="txt">calo hit #1 - E = 0.867 +/- 0.047 MeV - t = 2.193 +/- 0.339 ns</span></div>
              </div>
            </div>
            <div class="row rpart ck"><i class="exp"></i><svg class="ar"><use href="#arc"/></svg><svg class="cb"><use href="#chk"/></svg><span class="txt">Particle #3 (cluster #4) - undefined charged particle</span></div>
            <div class="g2">
              <div class="row rleaf orange"><svg class="cr"><use href="#cross"/></svg><span class="txt">Vertex on reference source plane - (x, y, z) = (1.000,182.708,-1</span></div>
              <div class="row rleaf orange"><svg class="cr"><use href="#cross"/></svg><span class="txt">Vertex on source foil - (x, y, z) = (0.125,182.923,-1121.323) mm</span></div>
              <div class="row rleaf orange"><svg class="cr"><use href="#cross"/></svg><span class="txt">Vertex on main calorimeter wall - (x, y, z) = (435.000,75.788,-1</span></div>
              <div class="row rleaf"><svg class="cl"><use href="#calo"/></svg><span class="txt">calo hit #2 - E = 0.579 +/- 0.039 MeV - t = 6.515 +/- 0.405 ns</span></div>
            </div>
          </div>
        </div>
      </aside>
    </div>
    <div class="eventbar">
      <span class="ev-lab">Event Number :</span><span class="ev-in">69</span><span class="ev-sl">/</span><span class="ev-in">9999</span>
      <div class="nav"><button><svg><use href="#first"/></svg></button><button><svg><use href="#prev"/></svg></button><button><svg><use href="#next"/></svg></button><button><svg><use href="#last"/></svg></button></div>
    </div>
    <div class="taskbar">
      <svg class="t-logo"><use href="#ice"/></svg>
      <span class="t-btn"><i class="minbar"></i></span><span class="t-btn t-w"><svg class="t-ic"><use href="#wins"/></svg></span><span class="t-btn t-m"><svg class="t-ic"><use href="#mon"/></svg></span><span class="t-btn t-g"><svg class="t-ic"><use href="#glob"/></svg></span>
      <div class="wss"><span class="on">1</span><span>2</span><span>3</span><span>4</span></div>
      <svg class="t-xt"><use href="#xt"/></svg><span class="t-term">xterm</span>
      <div class="task"><svg class="task-x"><use href="#xlogo"/></svg><span>SuperNEMO snvisualization...</span></div>
      <div class="sysclock"><i class="cpu"></i><span class="mail">✉</span><span class="lcd">13:45:02</span></div>
    </div>
  </article>
</div>
</body></html>
```
FILE: styles.css
```css
*{box-sizing:border-box}
html,body{margin:0;padding:0;background:#000}
body{width:3840px;height:1080px;overflow:hidden;font-family:"Liberation Sans",Arial,sans-serif}
.defs{position:absolute}
.desktop{position:relative;width:3840px;height:1080px;display:flex;background:#000}
.screen-a{width:1920px}
.screen-b{width:1920px;display:flex;flex-direction:column}
.shade-a{height:28px;background:linear-gradient(#4f4d46,#413f3b);position:relative;display:flex;align-items:center;padding-left:793px}
.vnc-title{color:#d6d6d0;font:700 14.500px "Noto Sans","Liberation Sans",sans-serif;letter-spacing:0;transform:scaleX(.96);transform-origin:left}
.strip{position:absolute;left:793px;top:28px;width:310px;height:2px;background:#fff}
.close-a{position:absolute;left:1900px;top:5px;width:15px;height:16px}
.topbar{height:28px;background:linear-gradient(#55534c,#46443f);display:flex;align-items:center;padding-left:12px;color:#cfcfc8;font:600 15px "Open Sans",sans-serif;letter-spacing:.4px}
.activities{width:88px}
.appicon{width:16px;height:16px;margin-right:6px}
.appname{width:93px}
.caret{width:0;height:0;border-left:5px solid transparent;border-right:5px solid transparent;border-top:5px solid #c8c8c2}
.dateclock{margin-left:754px;font-size:14px}
.tray{margin-left:auto;display:flex;align-items:center;padding-right:16px}
.tr-teams{width:22px;height:24px;margin-right:28px}
.tr-bt{width:10px;height:18px;margin-right:37px}
.tr-slack{width:20px;height:20px;margin-right:24px}
.tr-en{font-size:15px;color:#b8c4d0;margin-right:4px}
.small-gap{margin-right:36px}
.tr-net{width:16px;height:18px;margin-right:14px}
.tr-spk{width:16px;height:18px;margin-right:12px}
.tr-bat{width:12px;height:20px;margin-right:14px}
.under{flex:1;display:flex;min-height:0}
.dock{width:67px;background:linear-gradient(#533a3f,#433539);display:flex;flex-direction:column;padding-bottom:19px}
.dk{height:64px;display:flex;align-items:center;justify-content:center;position:relative;flex:none}
.ico{width:48px;height:48px}
.cam{height:34px}
.active::before{content:"";position:absolute;left:2px;right:3px;top:1px;bottom:2px;background:#6d575b;border-radius:3px}
.active .ico{position:relative}
.run1::after,.run2::after,.run3::after{content:"";position:absolute;left:2px;top:29px;width:6px;height:6px;border-radius:50%;background:#e95420}
.run2::after{top:25px;box-shadow:0 8px 0 #e95420}
.run3::after{top:21px;box-shadow:0 8px 0 #e95420,0 16px 0 #e95420}
.apps{margin-top:auto;align-self:center;display:grid;grid-template-columns:repeat(3,6px);gap:6px 6px;column-gap:6px}
.apps i{width:6px;height:6px;border-radius:50%;background:#e8e6e6}
.shade-b{flex:1;height:27px;background:linear-gradient(#46443f,#3c3b37);display:flex;align-items:flex-start;padding-left:761px;color:#d6d6d0}
.vnc-title2{font:700 14.500px "Noto Sans","Liberation Sans",sans-serif;padding-top:3px;transform:scaleX(.94);transform-origin:left}
.winctl{margin-left:auto;display:flex;gap:4px;padding-right:5px;padding-top:4px}
.winctl i{width:16px;height:16px;border-radius:50%;background:#575652;color:#35342f;font:700 11px/16px "Liberation Sans",sans-serif;text-align:center}

.win{position:absolute;width:1280px;height:1024px;background:#fff;display:flex;flex-direction:column;color:#222}
.win-a{left:320px;top:42px}
.win-b{left:2273px;top:55px}
.tbar{height:20px;display:flex;flex:none}
.xl{width:20px;height:20px;flex:none}
.tbar-blue{width:1200px;background:#0000a8;color:#e8e8ff;font:16.200px/20px "DejaVu Sans",sans-serif;white-space:nowrap}
.tbtns{flex:1;display:flex;gap:2px;padding:1px 0 0 1px;background:#fff}
.tbtns i{width:18px;height:19px;background:#000;border:2px solid #fff}
.menu{height:22px;flex:none;display:flex;align-items:center;border-bottom:1px solid #aaa;padding-left:5px;font-size:12px;color:#222}
.menu span:nth-child(1){width:33px}
.menu span:nth-child(2){width:38px}
.menu span:nth-child(3){width:54px}
.help{margin-left:auto;margin-right:12px}
.maintab{height:26px;flex:none;padding-left:9px;font-size:13px;display:flex;align-items:center}
.maintab span{padding-right:7px;border-right:1px solid #aaa;line-height:20px}
.work{height:898px;flex:none;display:flex;padding-left:4px}
.viewer{width:756px;flex:none;border-left:1px solid #aaa;height:896px;display:flex;flex-direction:column}
.viewer.wide{width:898px}
.canvas{display:block;border-top:2px solid #aaa;border-left:2px solid #aaa;background:#000;flex:none;box-sizing:content-box;height:850px}
.canvas-a{width:749px}
.canvas-b{width:891px}
.canvas text{font-family:"Liberation Sans",sans-serif}
.thin{fill:none;stroke:#4e4e4e;stroke-width:1}
.thick{fill:none;stroke:#5a5a5a;stroke-width:3}
.sep{fill:none;stroke:#5a5a5a;stroke-width:2}
.hit{fill:none;stroke:#ef5a14;stroke-width:2}
.mid{fill:none;stroke:#a34aa3;stroke-width:1}
.g-tick{fill:none;stroke:#128a12;stroke-width:1}
.c-blue,.c-blue circle{fill:none;stroke:#1060f0;stroke-width:1.500}
.c-blue2 circle{fill:none;stroke:#1a3ce0;stroke-width:1}
.c-or circle{fill:none;stroke:#f25a10;stroke-width:1.500}
.c-cy circle{fill:none;stroke:#28e8e8;stroke-width:1}
.c-gr circle{fill:none;stroke:#14e860;stroke-width:1.200}
.c-yg{fill:none;stroke:#a8f020;stroke-width:1}
.c-ye,.c-ye circle{fill:none;stroke:#f8f020;stroke-width:1.400}
.c-am circle{fill:none;stroke:#ffa81a;stroke-width:1.400}
.c-wh circle{fill:none;stroke:#fff;stroke-width:1.500}
.ln-cy{fill:none;stroke:#6ff0f0;stroke-width:1}
.ln-or{fill:none;stroke:#f25a10;stroke-width:1.300}
.ln-ordash{fill:none;stroke:#f25a10;stroke-width:1.300;stroke-dasharray:4 5}
.f-or,.f-or circle{fill:#f25a10}
.f-wh circle{fill:#fff}
.f-gr,.f-gr circle{fill:#14e860}
.f-ye circle{fill:#f8f020}
.f-bl circle{fill:#1060f0}
.f-am{fill:#ffa81a}
.vx-m path{fill:none;stroke:#e020e0}
.vx-o path{fill:none;stroke:#f25a10;stroke-width:1}
.tick-o,.tick-o path{fill:none;stroke:#a040d0}
.tick-c{fill:none;stroke:#28e8e8}
.tick-b{fill:none;stroke:#3a6ae0}
.tick-g{fill:none;stroke:#60f060}
.tick-y{fill:none;stroke:#f0e040}
.lg{font-size:27.500px}
.lg2{font-size:31px}
.sup{font-size:16px}
.sup2{font-size:18px}
.lg-w{fill:#fff}.lg-t{fill:#00a08c}.lg-y{fill:#ffff00}.lg-c{fill:#30f0f0}.lg-o{fill:#f25a10}
.sup-t{fill:#00a08c}.sup-c{fill:#30f0f0}
.canvas text.greek{font-family:"Liberation Serif",serif}
.info{font-size:13px}
.iw{fill:#e8e8e8}.ir{fill:#f03a10}
.views{flex:1;display:flex;align-items:center;justify-content:center;font-size:12.300px;color:#333;padding-right:8px;padding-bottom:6px}
.views .rd{width:10px;height:12px;margin-right:9px;margin-left:10px}
.views .dim{color:#666}
.panel{flex:1;margin-left:2px;border-top:1px solid #bbb;border-left:1px solid #bbb;margin-right:5px;height:896px;display:flex;flex-direction:column}
.tabs{height:21px;flex:none;display:flex;align-items:center;font-size:12.200px;padding-left:8px;color:#555}
.tabs span{display:block;line-height:20px}
.t-ov{width:61px}
.t-tr{width:44px;border-right:1px solid #999;margin-top:-2px;height:22px}
.t-op{margin-left:7px;width:47px;border-right:1px solid #999;color:#777}
.t-se{margin-left:7px;width:56px;border-right:1px solid #999;color:#111}
.content{flex:1;margin-left:2px;border:1px solid #bbb;border-right-width:2px;position:relative;overflow:hidden;min-height:0}
.tree{font-size:10.400px;color:#222;white-space:nowrap;overflow:hidden;position:absolute;left:0;right:1px;top:0;bottom:22px}
.row{height:18px;display:flex;align-items:center;position:relative}
.txt{display:block;flex:none}
.root{padding-left:20px}
.g0,.g1,.g2{position:relative}
.g0::before,.g1::before,.g2::before{content:"";position:absolute;top:0;bottom:9px;border-left:1px dotted #999}
.g0::before{left:10px;bottom:0}
.g1::before{left:29px}
.g1.open::before{bottom:0}
.g2::before{left:48px}
.exp{display:block;flex:none;width:9px;height:9px;border:1px solid #999;margin-top:3px;background:linear-gradient(#000,#000) center/5px 1px no-repeat #fff;position:relative;z-index:1}
.exp.pl{background:linear-gradient(#000,#000) center/5px 1px no-repeat,linear-gradient(#000,#000) center/1px 5px no-repeat,#fff}
.exp::after{content:"";position:absolute;left:9px;top:3px;width:6px;border-top:1px dotted #999}
.r0{padding-left:6px}.r0 .txt{margin-left:24px}
.r1{padding-left:25px}.r1 .txt{margin-left:24px}
.rplain{padding-left:58px}
.rplain::before{content:"";position:absolute;left:29px;top:10px;width:10px;border-top:1px dotted #999}
.rleaf{padding-left:61px}.rleaf .txt{margin-left:5px}
.rleaf::before{content:"";position:absolute;left:49px;top:10px;width:10px;border-top:1px dotted #999}
.cr{width:11px;height:11px;flex:none;margin-top:2px}
.magenta .cr{color:#e020e0}
.orange .cr{color:#f05010}
.cl{width:12px;height:13px;flex:none;margin-top:3px;margin-left:-1px}
.ck .txt{margin-top:-4px}
.cb{width:11px;height:12px;flex:none;margin-top:3px}
.rsol{padding-left:25px}.rsol .cb{margin-left:25px}.rsol .txt{margin-left:4px}
.rpart{padding-left:25px}.rpart .ar{width:11px;height:11px;flex:none;margin-left:8px;margin-top:2px}.rpart .cb{margin-left:6px}.rpart .txt{margin-left:4px}
.rclus{padding-left:44px}.rclus .st{width:16px;height:16px;flex:none;margin-left:6px;margin-top:2px}.rclus .cb{margin-left:3px}.rclus .txt{margin-left:4px}
.rpoly{padding-left:44px}.rpoly .cb{margin-left:25px}.rpoly .txt{margin-left:4px}
.c-orange .st{color:#f05010}
.c-blueish .st{color:#1060f0}
.c-green .st{color:#10e040}
.c-yellow .st{color:#f4f010}
.c-amber .st{color:#ffa010}
.hscroll{position:absolute;left:7px;right:6px;bottom:1px;height:17px;display:flex;align-items:center}
.sa{width:7px;height:9px;flex:none}
.sa-end{margin-left:auto}
.thumb{flex:none;width:363px;margin-left:2px;height:17px;border:1px solid #aaa;box-shadow:inset 1px 1px #fff;background:linear-gradient(#aaa,#aaa) center/1px 9px no-repeat,linear-gradient(#aaa,#aaa) calc(50% + 3px) center/1px 9px no-repeat,linear-gradient(#aaa,#aaa) calc(50% - 3px) center/1px 9px no-repeat}
.eventbar{height:33px;flex:none;border-top:1px solid #aaa;display:flex;align-items:flex-start;padding-left:13px;padding-top:7px;font-size:11.200px;color:#666;position:relative}
.ev-lab{width:95px;line-height:14px}
.ev-in{width:96px;height:19px;border-left:1px solid #aaa;border-top:1px solid #aaa;text-align:right;padding-right:4px;line-height:17px;color:#777;font-size:13px}
.ev-sl{width:35px;text-align:center;line-height:14px}
.nav{display:flex;margin-left:6px;flex:none;gap:2px;margin-top:1px}
.nav button{width:232px;height:17px;padding:0;border:0;border-right:1px solid #aaa;border-bottom:1px solid #aaa;background:#fff;display:flex;align-items:center;justify-content:center;padding-top:3px}
.nav svg{width:7px;height:9px}
.taskbar{height:25px;flex:none;display:flex;align-items:center;color:#000;padding:0 2px 0 5px}
.win-b .taskbar{padding-right:30px}
.t-logo{width:45px;height:24px;flex:none;margin-right:3px}
.t-btn{width:24px;height:25px;border-left:1px solid #222;display:flex;align-items:center;justify-content:center;flex:none;border-top:1px solid #fff}
.t-w{width:25px}
.t-m{width:29px}
.t-g{width:25px;margin-right:5px}
.t-ic{width:18px;height:22px}
.minbar{width:9px;height:2px;background:#000;margin-top:14px}
.wss{display:flex;flex:none;font:17px "DejaVu Sans",sans-serif}
.wss span{width:28px;height:25px;border-right:1px solid #222;display:flex;align-items:center;justify-content:center}
.wss .on{border-left:1px solid #222;border-top:1px solid #222}
.t-xt{width:18px;height:24px;flex:none;margin-left:4px}
.t-term{font:17px "DejaVu Sans Condensed","DejaVu Sans",sans-serif;margin-left:3px;width:268px;flex:none}
.task{width:288px;height:25px;border-left:2px solid #111;border-top:2px solid #111;display:flex;align-items:center;flex:none;font:700 15.900px "DejaVu Sans",sans-serif;white-space:nowrap}
.task-x{width:20px;height:20px;flex:none}
.sysclock{margin-left:auto;display:flex;align-items:center;flex:none}
.cpu{width:18px;height:22px;background:#000;border-bottom:2px solid #0c0;display:block}
.mail{font-size:13px;margin:0 6px;color:#333}
.lcd{background:#000;color:#10e010;font:17px "DejaVu Sans Mono",monospace;letter-spacing:.2px;padding:0 1px;height:20px;line-height:20px;width:85px}
```
